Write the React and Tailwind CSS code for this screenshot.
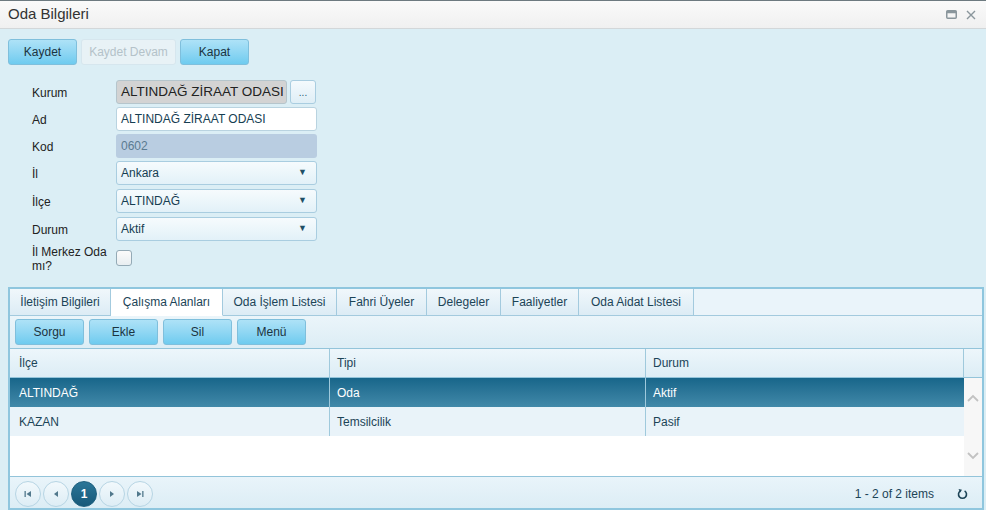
import React from "react";

const tabs = ["İletişim Bilgileri", "Çalışma Alanları", "Oda İşlem Listesi", "Fahri Üyeler", "Delegeler", "Faaliyetler", "Oda Aidat Listesi"];
const tabWidths = ["w-[101px]", "w-[112px]", "w-[114px]", "w-[90px]", "w-[74px]", "w-[78px]", "w-[115px]"];

const rows = [
  { ilce: "ALTINDAĞ", tipi: "Oda", durum: "Aktif", selected: true },
  { ilce: "KAZAN", tipi: "Temsilcilik", durum: "Pasif", selected: false },
];

function BlueButton({ children, className = "" }) {
  return (
    <button className={`h-[26px] rounded-[3px] border border-[#7fbfdc] bg-gradient-to-b from-[#aee2f7] to-[#6ecbef] text-[12px] text-[#1b3340] ${className}`}>
      {children}
    </button>
  );
}

function SelectBox({ value }) {
  return (
    <div className="flex h-[24px] w-[201px] items-center justify-between rounded-[3px] border border-[#a9cde0] bg-gradient-to-b from-[#f6fbfd] to-[#e2f1f8] pl-[4px] pr-[9px] text-[12px] text-[#163e52]">
      <span>{value}</span>
      <span className="text-[9px] text-[#1f4f66]">▼</span>
    </div>
  );
}

function PagerBtn({ children, active }) {
  return (
    <div
      className={`flex h-[26px] w-[26px] items-center justify-center rounded-full border ${
        active
          ? "border-[#1d5f7e] bg-gradient-to-b from-[#2a7698] to-[#17597a] text-[12px] font-bold text-white"
          : "border-[#b7d5e4] bg-gradient-to-b from-[#f2f9fc] to-[#ddedf5] text-[#51788c]"
      }`}
    >
      {children}
    </div>
  );
}

function FormRow({ label, children, h = "h-[27px]" }) {
  return (
    <div className={`flex ${h} items-start`}>
      <div className="flex h-[25px] w-[84px] items-center">{label}</div>
      {children}
    </div>
  );
}

export default function App() {
  return (
    <div className="flex h-[510px] w-[986px] flex-col overflow-hidden border-t border-[#6d7a80] bg-[#dbeef5] font-['Liberation_Sans',Arial,sans-serif]">
      {/* title bar */}
      <div className="flex h-[28px] shrink-0 items-center justify-between border-b border-[#d3d7d9] bg-gradient-to-b from-[#fafafa] to-[#f0f0f0] pl-[8px] pr-[10px]">
        <span className="text-[15px] text-[#333]">Oda Bilgileri</span>
        <div className="flex items-center gap-[9px] text-[#8a969c]">
          <svg width="11" height="9" viewBox="0 0 11 9">
            <rect x="0.75" y="0.75" width="9.5" height="7.5" rx="1" fill="none" stroke="currentColor" strokeWidth="1.5" />
            <rect x="0.75" y="0.75" width="9.5" height="2.5" fill="currentColor" />
          </svg>
          <svg width="10" height="10" viewBox="0 0 10 10">
            <path d="M1 1 L9 9 M9 1 L1 9" stroke="currentColor" strokeWidth="1.4" />
          </svg>
        </div>
      </div>

      {/* action buttons */}
      <div className="mt-[10px] flex gap-[4px] pl-[8px]">
        <BlueButton className="w-[69px]">Kaydet</BlueButton>
        <button className="h-[26px] w-[95px] rounded-[3px] border border-[#d6e6ee] bg-[#e8f2f6] text-[12px] text-[#b4c2c9]">Kaydet Devam</button>
        <BlueButton className="w-[69px]">Kapat</BlueButton>
      </div>

      {/* form */}
      <div className="mt-[15px] flex flex-col pl-[32px] text-[12px] text-[#222]">
        <FormRow label="Kurum">
          <div className="flex h-[24px] w-[171px] items-center overflow-hidden whitespace-nowrap rounded-[3px] border border-[#b5c5cc] bg-[#d3d3d3] pl-[4px] text-[13.5px] text-[#222]">ALTINDAĞ ZİRAAT ODASI</div>
          <div className="ml-[3px] flex h-[24px] w-[26px] items-end justify-center rounded-[3px] border border-[#a9cde0] bg-gradient-to-b from-[#f4fafd] to-[#dfeef6] pb-[5px] text-[10px] leading-none text-[#2a5a70]">...</div>
        </FormRow>
        <FormRow label="Ad">
          <div className="flex h-[24px] w-[201px] items-center rounded-[3px] border border-[#b9d3e0] bg-white pl-[4px] text-[12px] text-[#163e52]">ALTINDAĞ ZİRAAT ODASI</div>
        </FormRow>
        <FormRow label="Kod">
          <div className="flex h-[24px] w-[201px] items-center rounded-[3px] bg-[#b9cde1] pl-[5px] text-[12px] text-[#5b7b91]">0602</div>
        </FormRow>
        <FormRow label="İl" h="h-[28px]">
          <SelectBox value="Ankara" />
        </FormRow>
        <FormRow label="İlçe" h="h-[28px]">
          <SelectBox value="ALTINDAĞ" />
        </FormRow>
        <FormRow label="Durum" h="h-[28px]">
          <SelectBox value="Aktif" />
        </FormRow>
        <div className="flex items-start">
          <span className="w-[84px] leading-[14px]">İl Merkez Oda mı?</span>
          <div className="mt-[5px] h-[16px] w-[16px] rounded-[3px] border border-[#94aab6] bg-gradient-to-b from-[#fbfbfb] to-[#e8eef1]" />
        </div>
      </div>

      {/* tab panel */}
      <div className="ml-[8px] mr-[2px] mt-[14px] flex min-h-0 flex-1 flex-col border-2 border-[#8fc6de] bg-[#e3f1f8]">
        <div className="flex h-[27px] shrink-0 bg-[#eaf4fa]">
          {tabs.map((t, i) => (
            <div
              key={t}
              className={`flex ${tabWidths[i]} items-center justify-center border-b border-r border-[#a3cade] text-[12px] text-[#1c4457] ${
                i === 1 ? "border-b-white bg-white" : "bg-gradient-to-b from-[#f0f7fb] to-[#dcecf5]"
              }`}
            >
              {t}
            </div>
          ))}
          <div className="flex-1 border-b border-[#a3cade]" />
        </div>

        {/* toolbar */}
        <div className="flex h-[33px] shrink-0 items-center gap-[5px] border-b border-[#93c4da] bg-gradient-to-b from-[#ebf5fa] to-[#dcedf5] pl-[5px]">
          <BlueButton className="w-[69px]">Sorgu</BlueButton>
          <BlueButton className="w-[69px]">Ekle</BlueButton>
          <BlueButton className="w-[69px]">Sil</BlueButton>
          <BlueButton className="w-[69px]">Menü</BlueButton>
        </div>

        {/* grid header */}
        <div className="flex h-[29px] shrink-0 border-b border-[#93c4da] bg-gradient-to-b from-[#edf6fb] to-[#dcedf5] text-[12px] text-[#1c4457]">
          <div className="flex w-[320px] items-center border-r border-[#9fc9dc] pl-[9px]">İlçe</div>
          <div className="flex w-[316px] items-center border-r border-[#9fc9dc] pl-[7px]">Tipi</div>
          <div className="flex w-[318px] items-center border-r border-[#9fc9dc] pl-[7px]">Durum</div>
          <div className="flex-1" />
        </div>

        {/* grid body */}
        <div className="flex h-[98px] shrink-0 bg-white">
          <div className="flex w-[954px] flex-col">
            {rows.map((r) => (
              <div
                key={r.ilce}
                className={`flex h-[29px] text-[12px] ${
                  r.selected ? "bg-gradient-to-b from-[#17668a] to-[#4189a9] text-white" : "bg-[#e9f3f9] text-[#1c4457]"
                }`}
              >
                <div className="flex w-[320px] items-center border-r border-[#9fc9dc] pl-[9px]">{r.ilce}</div>
                <div className="flex w-[316px] items-center border-r border-[#9fc9dc] pl-[7px]">{r.tipi}</div>
                <div className="flex w-[318px] items-center pl-[7px]">{r.durum}</div>
              </div>
            ))}
          </div>
          <div className="flex flex-1 flex-col items-center justify-between bg-[#f7f7f7] py-[16px] text-[#c2c2c2]">
            <svg width="12" height="8" viewBox="0 0 12 8">
              <path d="M1 7 L6 2 L11 7" fill="none" stroke="currentColor" strokeWidth="1.8" />
            </svg>
            <svg width="12" height="8" viewBox="0 0 12 8">
              <path d="M1 1 L6 6 L11 1" fill="none" stroke="currentColor" strokeWidth="1.8" />
            </svg>
          </div>
        </div>

        {/* pager */}
        <div className="flex flex-1 items-center justify-between border-t border-[#93c4da] bg-gradient-to-b from-[#e9f4fa] to-[#dcedf5] pl-[5px] pr-[14px] pt-[2px]">
          <div className="flex items-center gap-[2px]">
            <PagerBtn>
              <svg width="8" height="8" viewBox="0 0 8 8"><rect x="0.5" y="1" width="1.3" height="6" fill="currentColor" /><path d="M7 1 L2.5 4 L7 7 Z" fill="currentColor" /></svg>
            </PagerBtn>
            <PagerBtn>
              <svg width="6" height="8" viewBox="0 0 6 8"><path d="M5 1 L1 4 L5 7 Z" fill="currentColor" /></svg>
            </PagerBtn>
            <PagerBtn active>1</PagerBtn>
            <PagerBtn>
              <svg width="6" height="8" viewBox="0 0 6 8"><path d="M1 1 L5 4 L1 7 Z" fill="currentColor" /></svg>
            </PagerBtn>
            <PagerBtn>
              <svg width="8" height="8" viewBox="0 0 8 8"><path d="M1 1 L5.5 4 L1 7 Z" fill="currentColor" /><rect x="6.2" y="1" width="1.3" height="6" fill="currentColor" /></svg>
            </PagerBtn>
          </div>
          <div className="flex items-center gap-[23px] text-[12px] text-[#1c4457]">
            <span>1 - 2 of 2 items</span>
            <svg width="11" height="12" viewBox="0 0 11 12">
              <path d="M7.6 2.9 A4 4 0 1 1 3.4 2.9" fill="none" stroke="#1c4457" strokeWidth="1.6" />
              <path d="M1.5 1 L5 1.8 L3.2 4.6 Z" fill="#1c4457" />
            </svg>
          </div>
        </div>
      </div>
    </div>
  );
}
